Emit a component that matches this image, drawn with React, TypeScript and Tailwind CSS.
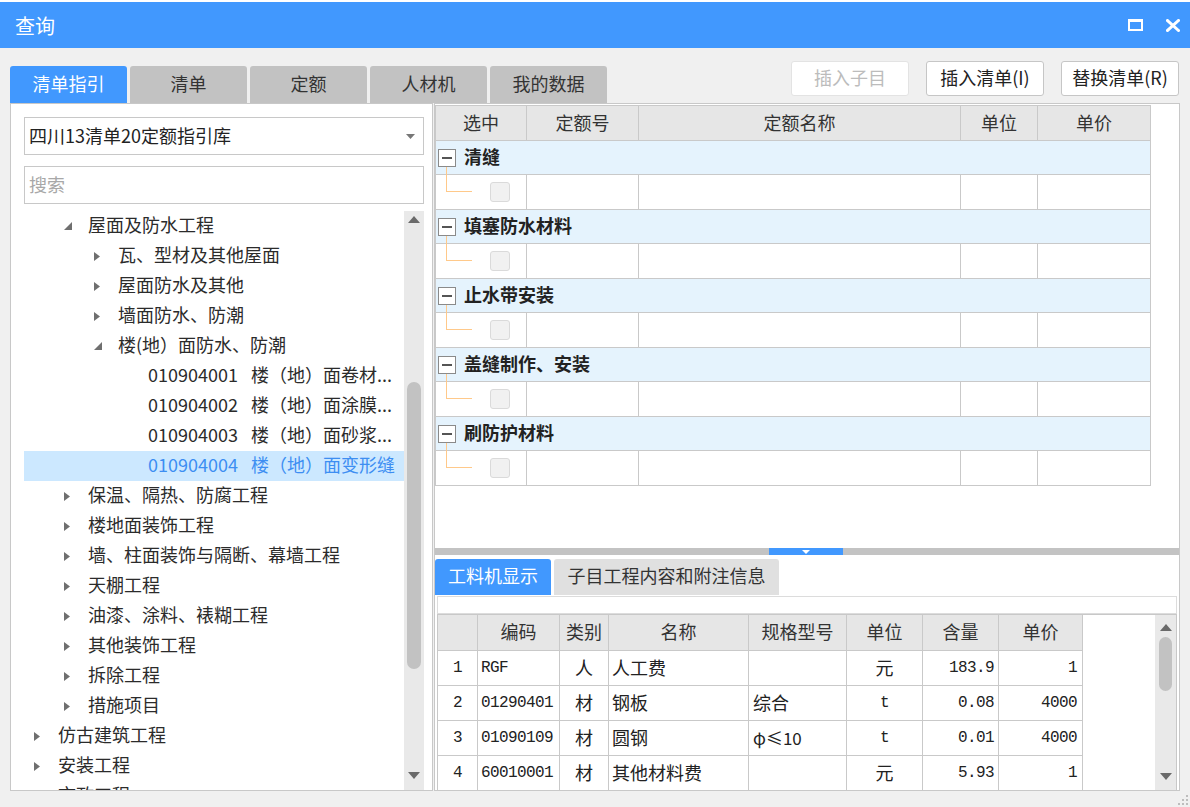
import React from "react";

type Node = { lvl: number; state: "open" | "closed" | "leaf"; text: string; code?: string; sel?: boolean };

const tree: Node[] = [
  { lvl: 1, state: "open", text: "屋面及防水工程" },
  { lvl: 2, state: "closed", text: "瓦、型材及其他屋面" },
  { lvl: 2, state: "closed", text: "屋面防水及其他" },
  { lvl: 2, state: "closed", text: "墙面防水、防潮" },
  { lvl: 2, state: "open", text: "楼(地）面防水、防潮" },
  { lvl: 3, state: "leaf", code: "010904001", text: "楼（地）面卷材..." },
  { lvl: 3, state: "leaf", code: "010904002", text: "楼（地）面涂膜..." },
  { lvl: 3, state: "leaf", code: "010904003", text: "楼（地）面砂浆..." },
  { lvl: 3, state: "leaf", code: "010904004", text: "楼（地）面变形缝", sel: true },
  { lvl: 1, state: "closed", text: "保温、隔热、防腐工程" },
  { lvl: 1, state: "closed", text: "楼地面装饰工程" },
  { lvl: 1, state: "closed", text: "墙、柱面装饰与隔断、幕墙工程" },
  { lvl: 1, state: "closed", text: "天棚工程" },
  { lvl: 1, state: "closed", text: "油漆、涂料、裱糊工程" },
  { lvl: 1, state: "closed", text: "其他装饰工程" },
  { lvl: 1, state: "closed", text: "拆除工程" },
  { lvl: 1, state: "closed", text: "措施项目" },
  { lvl: 0, state: "closed", text: "仿古建筑工程" },
  { lvl: 0, state: "closed", text: "安装工程" },
  { lvl: 0, state: "closed", text: "市政工程" },
];

const pad = ["pl-[10px]", "pl-[40px]", "pl-[70px]", "pl-[100px]"];

const groups = ["清缝", "填塞防水材料", "止水带安装", "盖缝制作、安装", "刷防护材料"];

const materials = [
  ["1", "RGF", "人", "人工费", "", "元", "183.9", "1"],
  ["2", "01290401", "材", "钢板", "综合", "t", "0.08", "4000"],
  ["3", "01090109", "材", "圆钢", "φ≤10", "t", "0.01", "4000"],
  ["4", "60010001", "材", "其他材料费", "", "元", "5.93", "1"],
];

const matCols = [
  { w: "w-[40px]", align: "justify-center" },
  { w: "w-[82px]", align: "justify-start pl-[3px]" },
  { w: "w-[49px]", align: "justify-center" },
  { w: "w-[140px]", align: "justify-start pl-[3px]" },
  { w: "w-[98px]", align: "justify-start pl-[4px]" },
  { w: "w-[76px]", align: "justify-center" },
  { w: "w-[76px]", align: "justify-end pr-[4px]" },
  { w: "w-[84px]", align: "justify-end pr-[5px]" },
];

const matHead = ["", "编码", "类别", "名称", "规格型号", "单位", "含量", "单价"];

function TriRight() {
  return (
    <svg width="6" height="9" viewBox="0 0 6 9">
      <path d="M0 0L6 4.5L0 9Z" fill="#6f6f6f" />
    </svg>
  );
}

function TriOpen() {
  return (
    <svg width="8" height="8" viewBox="0 0 8 8">
      <path d="M8 0V8H0Z" fill="#6f6f6f" />
    </svg>
  );
}

function Arrow({ down }: { down?: boolean }) {
  return (
    <svg width="12" height="7" viewBox="0 0 12 7">
      <path d={down ? "M0 0H12L6 7Z" : "M0 7H12L6 0Z"} fill="#6a6a6a" />
    </svg>
  );
}

function TreeRow({ n }: { n: Node }) {
  return (
    <div
      className={`flex h-[30px] shrink-0 items-center text-[18px] whitespace-nowrap ${pad[n.lvl]} ${
        n.sel ? "bg-[#cce8ff] text-[#3d8ef2]" : "text-[#2b2b2b]"
      }`}
    >
      <span className="flex w-[24px] shrink-0 items-center">
        {n.state === "closed" && <TriRight />}
        {n.state === "open" && <TriOpen />}
      </span>
      {n.code && <span className="mr-[13px] pb-[4px]">{n.code}</span>}
      <span className="pb-[4px]">{n.text}</span>
    </div>
  );
}

function GroupRow({ label }: { label: string }) {
  return (
    <div className="flex h-[34px] items-center border-b border-r border-[#c9c9c9] bg-[#e5f3fd]">
      <span className="relative ml-[2px] flex h-[18px] w-[18px] items-center justify-center border border-[#8a8a8a] bg-white">
        <span className="h-[2px] w-[10px] bg-[#555]" />
        <span className="absolute left-[7px] top-[17px] h-[8px] w-px bg-[#ffc98a]" />
      </span>
      <span className="ml-[8px] pb-[4px] text-[18px] font-bold text-[#222]">{label}</span>
    </div>
  );
}

function ChildRow() {
  return (
    <div className="flex h-[35px] border-b border-[#c9c9c9]">
      <div className="flex w-[91px] items-start border-r border-[#c9c9c9]">
        <span className="ml-[10px] h-[17px] w-[26px] border-b border-l border-[#ffc98a]" />
        <span className="ml-[18px] mt-[7px] h-[20px] w-[20px] rounded-[3px] border border-[#dadada] bg-[#f1f1f1]" />
      </div>
      <div className="w-[112px] border-r border-[#c9c9c9]" />
      <div className="w-[322px] border-r border-[#c9c9c9]" />
      <div className="w-[77px] border-r border-[#c9c9c9]" />
      <div className="w-[113px] border-r border-[#c9c9c9]" />
    </div>
  );
}

function isAscii(s: string) {
  return /^[\x00-\x7f]*$/.test(s);
}

function cellFont(s: string) {
  if (s.startsWith("φ")) return "text-[17px] pb-[2px]";
  if (isAscii(s)) return "font-['Liberation_Mono','DejaVu_Sans_Mono',monospace] text-[16px] tracking-[-0.6px]";
  return "text-[18px] pb-[3px]";
}

export default function App() {
  return (
    <div className="flex h-[807px] w-[1190px] flex-col overflow-hidden bg-[#f0f0f0] font-['Noto_Sans_CJK_SC',sans-serif] leading-none">
      <div className="h-[2px] bg-white" />
      {/* title bar */}
      <div className="flex h-[46px] items-center bg-[#4198fe] pl-[15px] pr-[10px]">
        <span className="pt-[2px] text-[20px] text-white">查询</span>
        <div className="ml-auto flex items-center gap-[23px]">
          <span className="h-[12px] w-[15px] border-2 border-t-[3px] border-white" />
          <svg width="14" height="13" viewBox="0 0 14 13">
            <path d="M1.5 1.5L12.5 11.5M12.5 1.5L1.5 11.5" stroke="#fff" strokeWidth="3" strokeLinecap="square" />
          </svg>
        </div>
      </div>

      {/* tabs + buttons */}
      <div className="flex h-[55px] justify-between pl-[10px] pr-[11px]">
        <div className="flex items-end gap-[3px]">
          <div className="flex h-[37px] w-[117px] items-center justify-center rounded-t-[3px] bg-[#4198fe] pb-[4px] text-[18px] text-white">
            清单指引
          </div>
          {["清单", "定额", "人材机", "我的数据"].map((t) => (
            <div
              key={t}
              className="flex h-[37px] w-[117px] items-center justify-center rounded-t-[3px] bg-[#c2c2c2] pb-[4px] text-[18px] text-[#333]"
            >
              {t}
            </div>
          ))}
        </div>
        <div className="mt-[13px] flex gap-[17px]">
          <button className="h-[35px] w-[118px] rounded-[3px] border border-[#e3e3e3] bg-white pb-[3px] text-[18px] text-[#bcbcbc]">
            插入子目
          </button>
          <button className="h-[35px] w-[118px] rounded-[3px] border border-[#c6c6c6] bg-white pb-[3px] text-[18px] text-[#222]">
            插入清单(I)
          </button>
          <button className="h-[35px] w-[118px] rounded-[3px] border border-[#c6c6c6] bg-white pb-[3px] text-[18px] text-[#222]">
            替换清单(R)
          </button>
        </div>
      </div>

      {/* main */}
      <div className="flex h-[688px] px-[10px]">
        {/* left panel */}
        <div className="flex w-[423px] flex-col border border-[#c8c8c8] bg-white pl-[13px] pr-[8px] pt-[13px]">
          <div className="flex h-[38px] shrink-0 items-center border border-[#c8c8c8] pl-[4px] pr-[8px] text-[18px] text-[#222]">
            <span className="pb-[3px]">四川13清单20定额指引库</span>
            <svg className="ml-auto" width="9" height="5" viewBox="0 0 9 5">
              <path d="M0 0H9L4.5 5Z" fill="#777" />
            </svg>
          </div>
          <div className="mt-[11px] flex h-[38px] shrink-0 items-center border border-[#c8c8c8] pb-[3px] pl-[4px] text-[18px] text-[#a8a8a8]">
            搜索
          </div>
          <div className="mt-[7px] flex min-h-0 flex-1">
            <div className="flex min-w-0 flex-1 flex-col overflow-hidden">
              {tree.map((n, i) => (
                <TreeRow key={i} n={n} />
              ))}
            </div>
            <div className="flex w-[20px] flex-col items-center bg-[#e9e9e9]">
              <div className="flex h-[12px] items-end">
                <Arrow />
              </div>
              <div className="h-[159px]" />
              <div className="h-[287px] w-[14px] rounded-full bg-[#c2c2c2]" />
              <div className="flex-1" />
              <div className="flex h-[18px] items-start">
                <Arrow down />
              </div>
            </div>
          </div>
        </div>

        {/* right panel */}
        <div className="ml-[1px] flex flex-1 flex-col border border-[#c8c8c8] bg-white">
          <div className="h-[444px] pt-[1px]">
            <div className="w-[716px] border-l border-t border-[#c9c9c9]">
              <div className="flex h-[35px] border-b border-[#c9c9c9] bg-[#e6e6e6] text-[18px] text-[#333]">
                {[
                  ["w-[91px]", "选中"],
                  ["w-[112px]", "定额号"],
                  ["w-[322px]", "定额名称"],
                  ["w-[77px]", "单位"],
                  ["w-[113px]", "单价"],
                ].map(([w, t]) => (
                  <div key={t} className={`${w} flex items-center justify-center border-r border-[#c9c9c9] pb-[3px]`}>
                    {t}
                  </div>
                ))}
              </div>
              {groups.map((g) => (
                <React.Fragment key={g}>
                  <GroupRow label={g} />
                  <ChildRow />
                </React.Fragment>
              ))}
            </div>
          </div>

          {/* splitter */}
          <div className="flex h-[7px]">
            <div className="w-[334px] bg-[#c3c3c3]" />
            <div className="flex w-[74px] items-center justify-center bg-[#4198fe]">
              <svg width="8" height="4" viewBox="0 0 8 4">
                <path d="M0 0H8L4 4Z" fill="#fff" />
              </svg>
            </div>
            <div className="flex-1 bg-[#c3c3c3]" />
          </div>

          {/* bottom tabs */}
          <div className="flex gap-[3px] pt-[4px]">
            <div className="flex h-[36px] w-[116px] items-center justify-center rounded-t-[3px] bg-[#4198fe] pb-[4px] text-[18px] text-white">
              工料机显示
            </div>
            <div className="flex h-[36px] w-[225px] items-center justify-center rounded-t-[3px] bg-[#e0e0e0] pb-[4px] text-[18px] text-[#333]">
              子目工程内容和附注信息
            </div>
          </div>
          <div className="mx-[2px] mt-[1px] h-[18px] border border-[#dcdcdc]" />

          {/* material table */}
          <div className="mx-[2px] flex h-[176px] border-l border-r border-t border-[#c8c8c8]">
            <div className="flex flex-col">
              <div className="flex h-[36px] border-b border-[#c9c9c9] bg-[#e6e6e6] text-[18px] text-[#333]">
                {matHead.map((t, i) => (
                  <div key={i} className={`${matCols[i].w} flex items-center justify-center border-r border-[#c9c9c9] pb-[3px]`}>
                    {t}
                  </div>
                ))}
              </div>
              {materials.map((r, ri) => (
                <div key={ri} className={`flex ${ri === 3 ? "h-[34px]" : "h-[35px] border-b"} border-[#c9c9c9]`}>
                  {r.map((c, ci) => (
                    <div
                      key={ci}
                      className={`${matCols[ci].w} ${matCols[ci].align} flex items-center border-r border-[#c9c9c9] text-[#222] ${cellFont(c)}`}
                    >
                      {c}
                    </div>
                  ))}
                </div>
              ))}
            </div>
            <div className="flex-1" />
            <div className="flex w-[21px] flex-col items-center bg-[#e9e9e9]">
              <div className="flex h-[22px] items-center pt-[2px]">
                <Arrow />
              </div>
              <div className="h-[54px] w-[13px] rounded-full bg-[#c2c2c2]" />
              <div className="flex-1" />
              <div className="flex h-[28px] items-center">
                <Arrow down />
              </div>
            </div>
          </div>
        </div>
      </div>

      {/* bottom frame */}
      <div className="flex flex-1 items-end justify-end pb-[2px] pr-[2px]">
        <svg width="10" height="10" viewBox="0 0 10 10">
          <rect x="8" y="0" width="2" height="2" fill="#bdbdbd" />
          <rect x="4" y="4" width="2" height="2" fill="#bdbdbd" />
          <rect x="8" y="4" width="2" height="2" fill="#bdbdbd" />
          <rect x="0" y="8" width="2" height="2" fill="#bdbdbd" />
          <rect x="4" y="8" width="2" height="2" fill="#bdbdbd" />
          <rect x="8" y="8" width="2" height="2" fill="#bdbdbd" />
        </svg>
      </div>
    </div>
  );
}
